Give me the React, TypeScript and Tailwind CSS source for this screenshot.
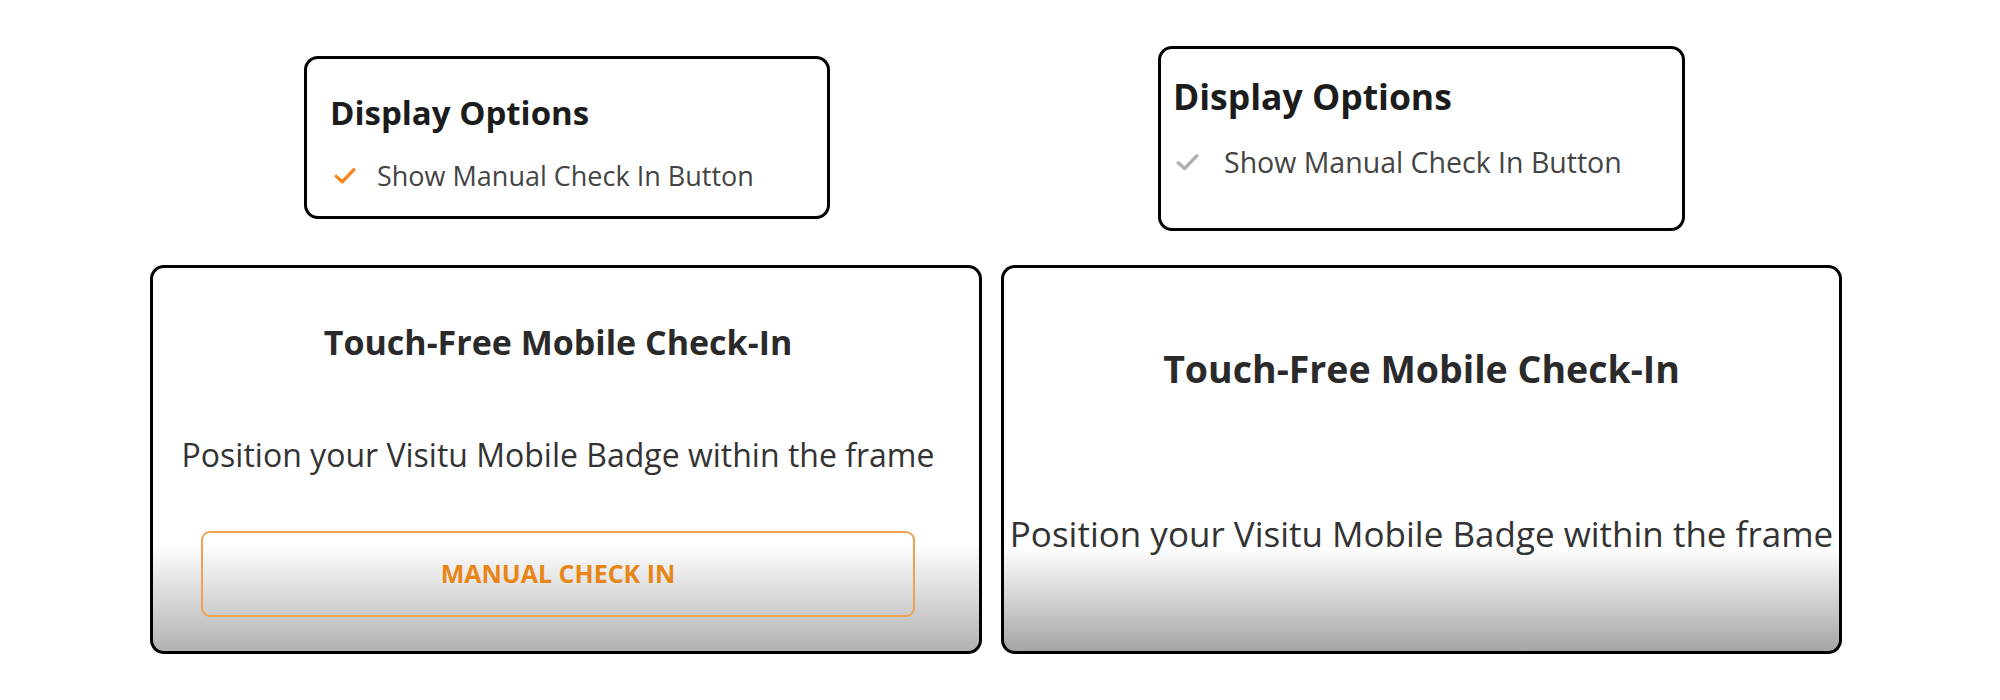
import React from "react";

const Check = ({ color, size }: { color: string; size: number }) => (
  <svg width={size} height={size * 0.8} viewBox="0 0 20 16" fill="none">
    <path d="M2 8.5 L7.5 13.5 L18 2.5" stroke={color} strokeWidth="3" strokeLinecap="round" strokeLinejoin="round" />
  </svg>
);

export default function App() {
  return (
    <div className="w-[2000px] h-[700px] bg-white flex gap-[19px] pl-[150px] font-['Open_Sans',sans-serif]">
      {/* Left column */}
      <div className="flex flex-col w-[832px]">
        <div className="mt-[56px] ml-[154px] w-[526px] h-[163px] border-[3px] border-black rounded-[14px] bg-white pl-[23px] pt-[34px]">
          <div className="text-[33px] leading-[40px] font-bold text-[#1c1c1c]">Display Options</div>
          <div className="flex items-center mt-[26px] h-[34px]">
            <div className="w-[24px] ml-[4px]"><Check color="#f5841f" size={22} /></div>
            <span className="ml-[19px] text-[27px] leading-[34px] text-[#444]">Show Manual Check In Button</span>
          </div>
        </div>
        <div className="mt-[46px] h-[389px] border-[3px] border-black rounded-[14px] bg-[linear-gradient(to_bottom,#ffffff_72%,#b2b2b2_100%)] flex flex-col items-center pr-[16px] pt-[52px]">
          <div className="text-[34px] leading-[44px] font-bold text-[#2a2a2a]">Touch-Free Mobile Check-In</div>
          <div className="mt-[71px] text-[32px] leading-[40px] text-[#333]">Position your Visitu Mobile Badge within the frame</div>
          <div className="mt-[56px] w-[714px] h-[86px] border-2 border-[#f0a050] rounded-[9px] flex items-center justify-center">
            <span className="text-[25px] font-bold text-[#e88518]">MANUAL CHECK IN</span>
          </div>
        </div>
      </div>
      {/* Right column */}
      <div className="flex flex-col w-[841px]">
        <div className="mt-[46px] ml-[157px] w-[527px] h-[185px] border-[3px] border-black rounded-[14px] bg-white pl-[12px] pt-[26px]">
          <div className="text-[35.5px] leading-[42px] font-bold text-[#1c1c1c]">Display Options</div>
          <div className="flex items-center mt-[27px] h-[36px]">
            <div className="w-[26px] ml-[3px]"><Check color="#b0b0b0" size={23} /></div>
            <span className="ml-[22px] text-[28.5px] leading-[36px] text-[#444]">Show Manual Check In Button</span>
          </div>
        </div>
        <div className="mt-[34px] h-[389px] border-[3px] border-black rounded-[14px] bg-[linear-gradient(to_bottom,#ffffff_73%,#a5a5a5_100%)] flex flex-col items-center pt-[78px]">
          <div className="text-[37.5px] leading-[46px] font-bold text-[#2a2a2a]">Touch-Free Mobile Check-In</div>
          <div className="mt-[120px] text-[35px] leading-[44px] text-[#333] whitespace-nowrap">Position your Visitu Mobile Badge within the frame</div>
        </div>
      </div>
    </div>
  );
}
